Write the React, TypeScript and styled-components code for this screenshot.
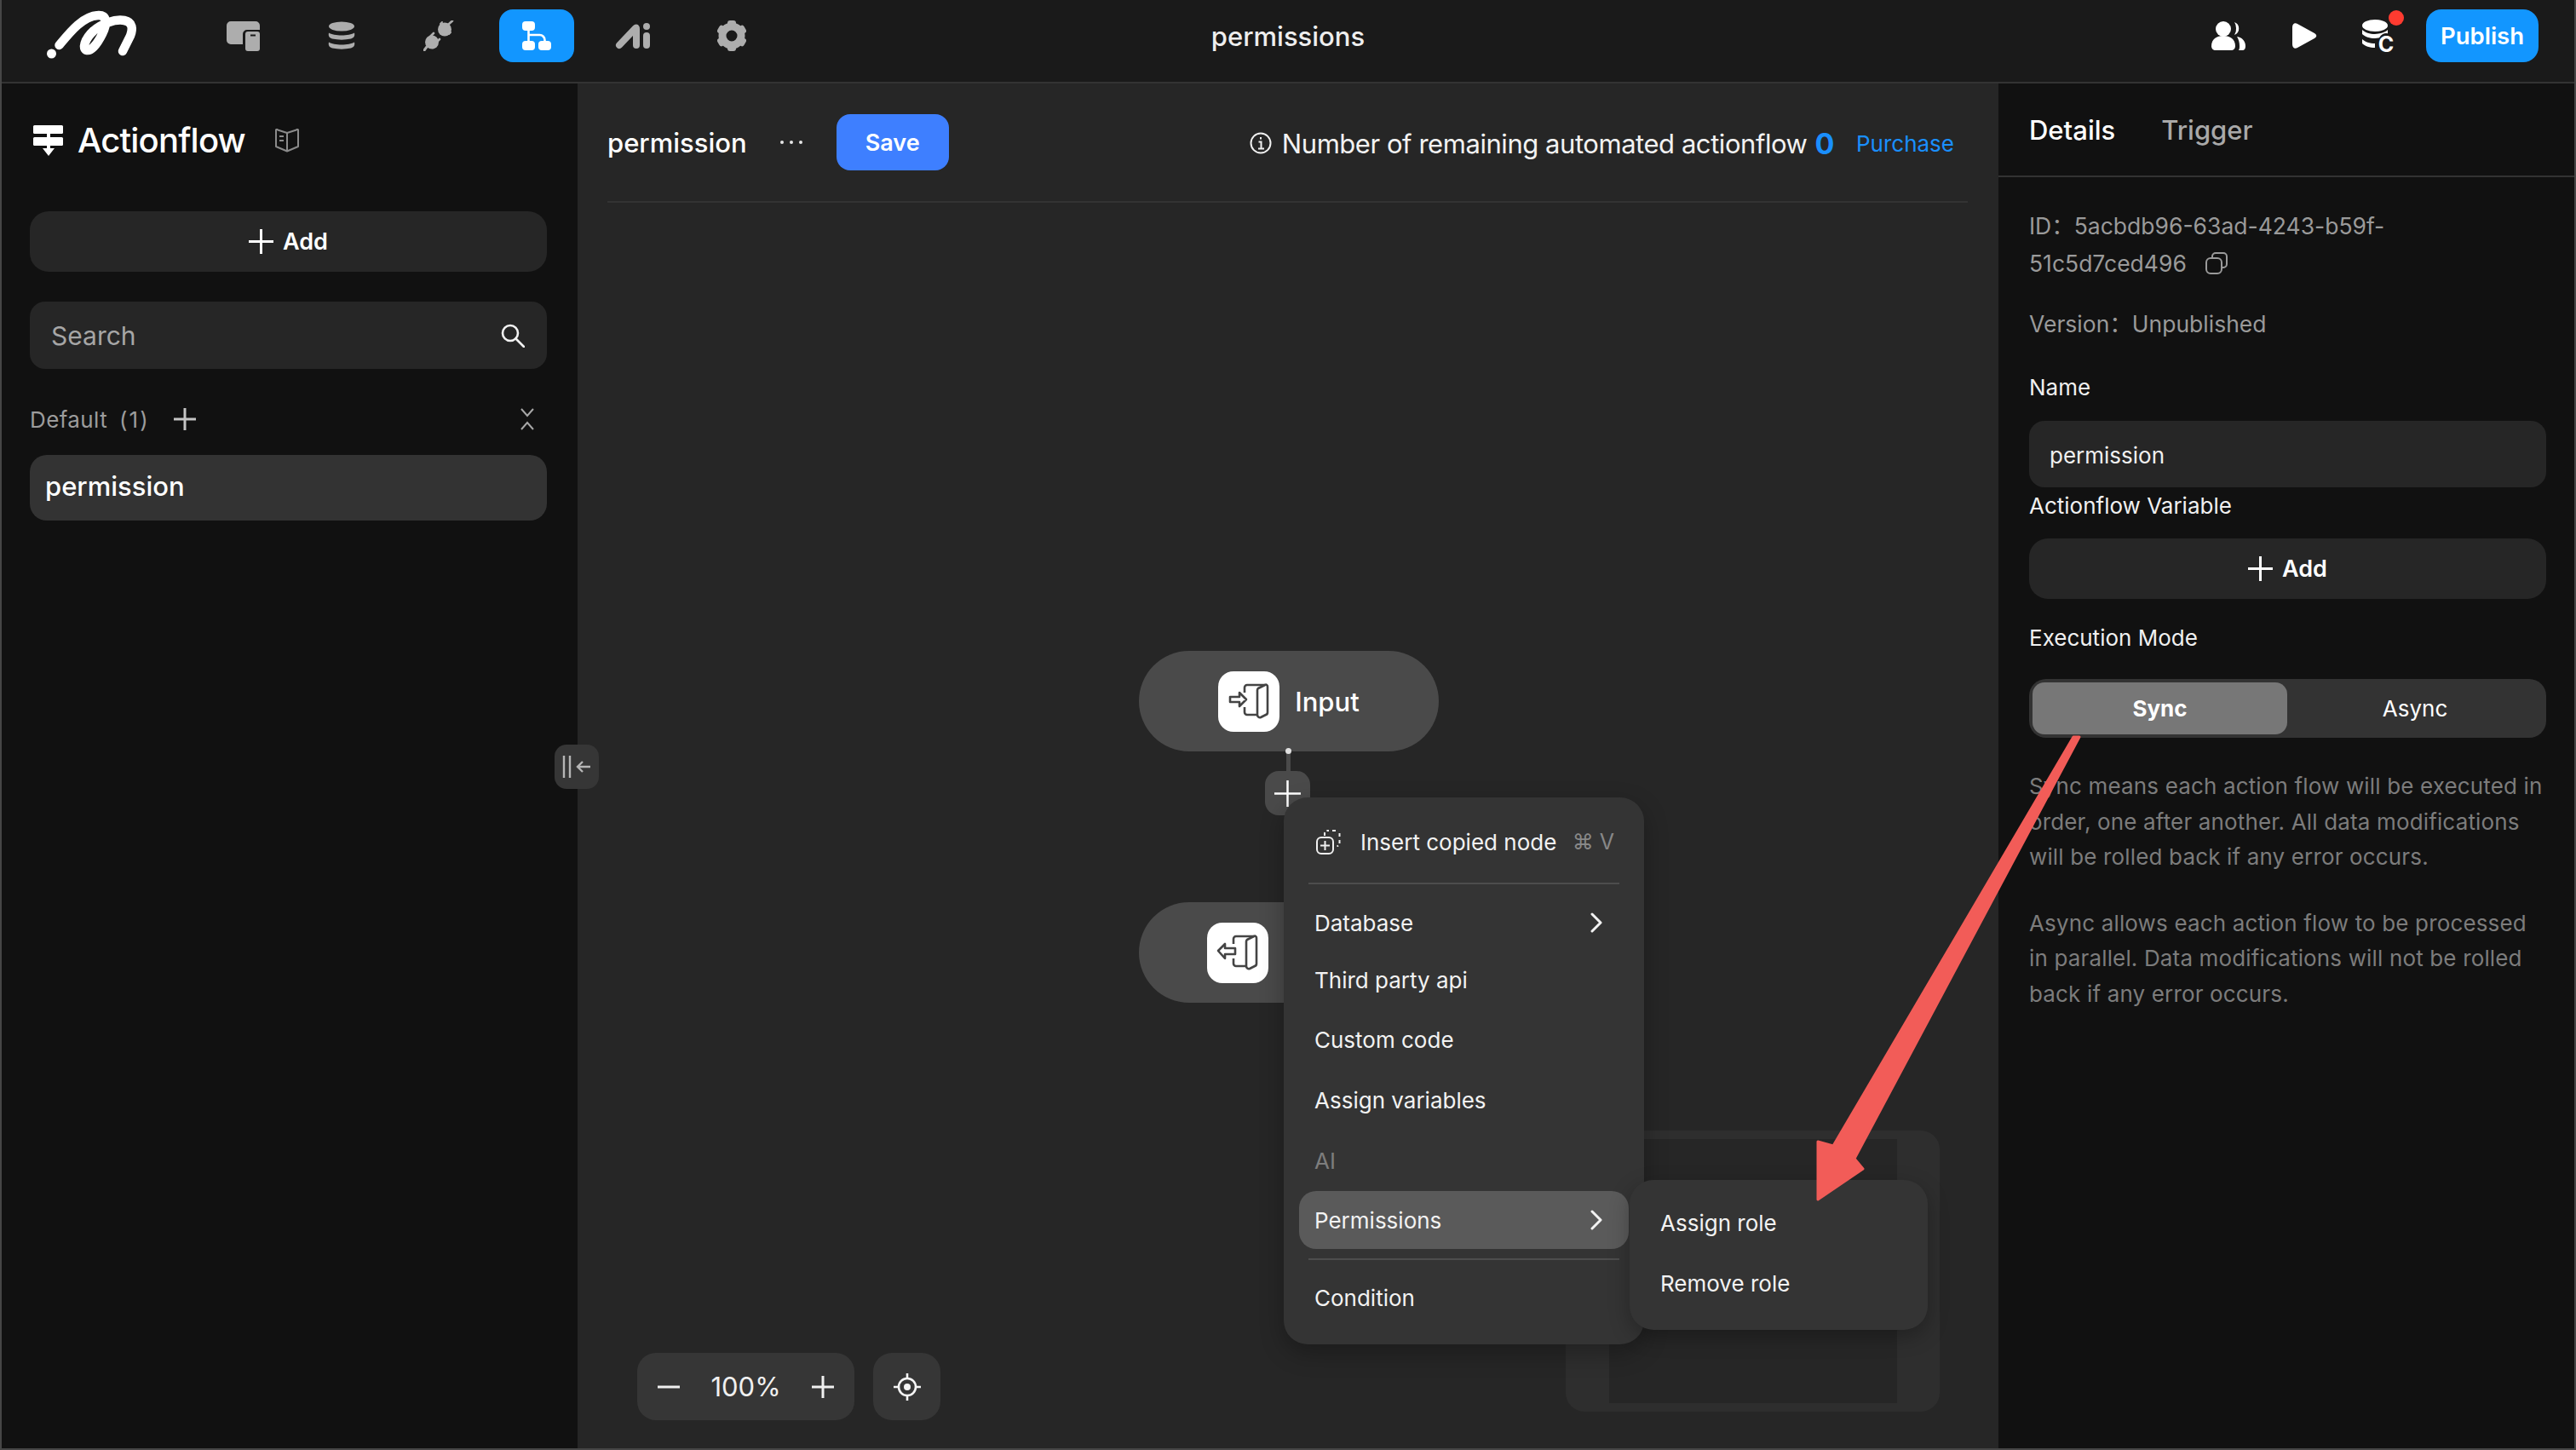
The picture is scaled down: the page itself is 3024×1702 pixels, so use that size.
import React from "react";
import styled, { createGlobalStyle } from "styled-components";

const GlobalStyle = createGlobalStyle`
  html, body {
    margin: 0;
    padding: 0;
    background: #111111;
  }
  * {
    box-sizing: border-box;
  }
  body {
    font-family: Inter, "Noto Sans CJK SC", "Liberation Sans", sans-serif;
    color: #ffffff;
  }
`;

const Shell = styled.div`
  position: relative;
  width: 3024px;
  height: 1702px;
  display: flex;
  flex-direction: column;
  overflow: hidden;
  border-left: 2px solid #464646;
  border-right: 2px solid #464646;
  border-bottom: 2px solid #464646;
`;

/* top bar */
const TopBar = styled.header`
  flex: 0 0 98px;
  display: grid;
  grid-template-columns: 1fr auto 1fr;
  align-items: center;
  background: #1a1a1a;
  border-bottom: 2px solid #333333;
  padding: 0 42px 12px 42px;
`;

const TopLeft = styled.div`
  display: flex;
  align-items: center;
`;

const LogoMark = styled.svg`
  width: 110px;
  height: 60px;
  margin: 0 78px 0 10px;
  display: block;
`;

const NavItem = styled.div<{ $active?: boolean }>`
  width: 88px;
  height: 62px;
  margin-right: 26.5px;
  border-radius: 16px;
  display: flex;
  align-items: center;
  justify-content: center;
  background: ${(p) => (p.$active ? "#1296ff" : "transparent")};
  color: ${(p) => (p.$active ? "#ffffff" : "#adadad")};
`;

const PageTitle = styled.div`
  font-size: 31px;
  font-weight: 500;
  color: #eeeeee;
`;

const TopRight = styled.div`
  display: flex;
  align-items: center;
  justify-content: flex-end;
`;

const ToolIcon = styled.div<{ $gap: number }>`
  position: relative;
  display: flex;
  margin-right: ${(p) => p.$gap}px;
  color: #ffffff;
`;

const RedDot = styled.span`
  position: absolute;
  top: -11px;
  right: -14px;
  width: 18px;
  height: 18px;
  border-radius: 50%;
  background: #ff3b30;
`;

const CoinLetter = styled.span`
  position: absolute;
  right: -3px;
  bottom: -5px;
  font-size: 25px;
  line-height: 27px;
  font-weight: 700;
  color: #ffffff;
  background: #1a1a1a;
  border-radius: 50%;
  width: 20px;
  text-align: center;
`;

const PublishButton = styled.div`
  width: 132px;
  height: 62px;
  border-radius: 18px;
  background: #1296ff;
  display: flex;
  align-items: center;
  justify-content: center;
  font-size: 27.5px;
  font-weight: 600;
`;

/* three columns */
const Columns = styled.div`
  flex: 1;
  display: flex;
  min-height: 0;
`;

const Sidebar = styled.aside`
  flex: 0 0 676px;
  background: #111111;
  padding: 37px 36px 0 33px;
  display: flex;
  flex-direction: column;
`;

const SideTitleRow = styled.div`
  display: flex;
  align-items: center;
  height: 60px;
  margin-bottom: 53px;
  padding-left: 3px;
`;

const SideTitle = styled.h1`
  margin: 0 35px 0 16px;
  font-size: 40px;
  font-weight: 500;
  letter-spacing: -0.8px;
  line-height: 60px;
  white-space: nowrap;
`;

const AddButton = styled.div`
  height: 71px;
  border-radius: 22px;
  background: #262626;
  display: flex;
  align-items: center;
  justify-content: center;
  gap: 11px;
  font-size: 27px;
  font-weight: 600;
  color: #ffffff;
`;

const SearchBox = styled.div`
  margin-top: 35px;
  height: 79px;
  border-radius: 18px;
  background: #262626;
  display: flex;
  align-items: center;
  justify-content: space-between;
  padding: 0 26px 0 25px;
  font-size: 30px;
  color: #a6a6a6;
`;

const GroupRow = styled.div`
  margin-top: 35px;
  height: 48px;
  margin-bottom: 1px;
  display: flex;
  align-items: center;
  font-size: 26px;
  letter-spacing: 0.4px;
  color: #9c9c9c;
`;

const GroupCount = styled.span`
  margin-left: 14px;
  margin-right: 28px;
  letter-spacing: 2px;
`;

const GroupToggle = styled.span`
  margin-left: auto;
  margin-right: 14px;
  display: flex;
`;

const FlowItem = styled.div`
  margin-top: 17px;
  height: 77px;
  border-radius: 20px;
  background: #333333;
  display: flex;
  align-items: center;
  padding: 0 0 5px 18px;
  font-size: 31px;
  font-weight: 500;
`;

/* centre canvas */
const Main = styled.main`
  position: relative;
  flex: 0 0 1668px;
  background: #262626;
  padding: 0 36px 0 35px;
  display: flex;
  flex-direction: column;
`;

const MainHeader = styled.div`
  flex: 0 0 140px;
  display: flex;
  align-items: center;
  border-bottom: 2px solid #333333;
`;

const FlowName = styled.div`
  font-size: 31px;
  font-weight: 500;
`;

const MoreDots = styled.div`
  margin: 0 40px 0 39px;
  display: flex;
  gap: 7px;
`;

const Dot = styled.i`
  width: 4px;
  height: 4px;
  border-radius: 50%;
  background: #e6e6e6;
`;

const SaveButton = styled.div`
  width: 132px;
  height: 66px;
  border-radius: 16px;
  background: #3e7fff;
  display: flex;
  align-items: center;
  justify-content: center;
  font-size: 27px;
  font-weight: 600;
`;

const Quota = styled.div`
  margin-left: auto;
  display: flex;
  align-items: center;
  font-size: 31px;
  letter-spacing: -0.45px;
  color: #f2f2f2;
  padding: 2px 16px 0 0;
`;

const QuotaText = styled.span`
  margin-left: 12px;
`;

const QuotaCount = styled.span`
  margin-left: 9px;
  font-size: 34px;
  font-weight: 700;
  color: #1a8fff;
`;

const PurchaseLink = styled.span`
  margin-left: 26px;
  font-size: 26px;
  letter-spacing: 0;
  color: #1a8fff;
`;

const CollapseHandle = styled.div`
  position: absolute;
  left: -27px;
  top: 776px;
  width: 52px;
  height: 52px;
  border-radius: 14px;
  background: #363636;
  display: flex;
  align-items: center;
  justify-content: center;
`;

const FlowNode = styled.div<{ $top: number }>`
  position: absolute;
  left: 659px;
  top: ${(p) => p.$top}px;
  width: 352px;
  height: 118px;
  border-radius: 59px;
  background: #4a4a4a;
  display: flex;
  align-items: center;
  justify-content: center;
  gap: 18px;
  font-size: 31px;
  font-weight: 500;
`;

const NodeTile = styled.div`
  width: 72px;
  height: 71px;
  border-radius: 18px;
  background: #ffffff;
  display: flex;
  align-items: center;
  justify-content: center;
`;

const Connector = styled.div`
  position: absolute;
  left: 832px;
  top: 780px;
  width: 5px;
  height: 30px;
  background: #4a4a4a;
  &::before {
    content: "";
    position: absolute;
    left: -1px;
    top: 0;
    width: 7px;
    height: 7px;
    border-radius: 50%;
    background: #e0e0e0;
  }
`;

const NodeAdd = styled.div`
  position: absolute;
  left: 807px;
  top: 807px;
  width: 53px;
  height: 52px;
  border-radius: 16px;
  background: #4a4a4a;
  display: flex;
  align-items: center;
  justify-content: center;
`;

const Minimap = styled.div`
  position: absolute;
  left: 1160px;
  top: 1229px;
  width: 439px;
  height: 330px;
  border-radius: 22px;
  background: #2e2e2e;
  padding: 10px 50px 10px 51px;
`;

const MinimapView = styled.div`
  width: 100%;
  height: 100%;
  background: #262626;
`;

const Menu = styled.div`
  position: absolute;
  left: 829px;
  top: 838px;
  width: 423px;
  height: 642px;
  border-radius: 28px;
  background: #343434;
  box-shadow: 0 10px 28px rgba(0, 0, 0, 0.28);
  padding: 18px;
  font-size: 26px;
  color: #f2f2f2;
`;

const SubMenu = styled.div`
  position: absolute;
  left: 1235px;
  top: 1287px;
  width: 350px;
  height: 176px;
  border-radius: 28px;
  background: #343434;
  box-shadow: 0 8px 24px rgba(0, 0, 0, 0.28);
  padding-top: 15px;
  font-size: 26px;
  color: #f2f2f2;
`;

const MenuRow = styled.div<{ $h: number; $active?: boolean; $muted?: boolean; $inset?: number }>`
  height: ${(p) => p.$h}px;
  display: flex;
  align-items: center;
  padding: 0 31px 0 ${(p) => p.$inset ?? 18}px;
  border-radius: 20px;
  background: ${(p) => (p.$active ? "#5a5a5a" : "transparent")};
  color: ${(p) => (p.$muted ? "#7d7d7d" : "#f2f2f2")};
  justify-content: space-between;
`;

const InsertLabel = styled.span`
  margin-left: 23px;
`;

const Shortcut = styled.span`
  margin-left: auto;
  color: #888888;
  font-size: 25px;
  margin-right: -14px;
  white-space: nowrap;
`;

const MenuDivider = styled.div<{ $before: number; $after: number }>`
  height: 2px;
  margin: ${(p) => p.$before}px 11px ${(p) => p.$after}px;
  background: #4d4d4d;
`;

const ZoomDock = styled.div`
  position: absolute;
  left: 70px;
  top: 1490px;
  display: flex;
  gap: 22px;
`;

const DockBox = styled.div<{ $w: number }>`
  width: ${(p) => p.$w}px;
  height: 79px;
  border-radius: 22px;
  background: #363636;
  display: flex;
  align-items: center;
  justify-content: space-between;
  padding: 0 24px;
  font-size: 31px;
  color: #f0f0f0;
`;

const CenteredDock = styled(DockBox)`
  justify-content: center;
  padding: 0;
`;

/* right panel */
const Details = styled.aside`
  flex: 1;
  background: #111111;
  display: flex;
  flex-direction: column;
`;

const Tabs = styled.div`
  flex: 0 0 110px;
  display: flex;
  align-items: center;
  gap: 54px;
  padding: 0 0 0 36px;
  border-bottom: 2px solid #333333;
`;

const Tab = styled.div<{ $on?: boolean }>`
  font-size: 31px;
  font-weight: 500;
  color: ${(p) => (p.$on ? "#ffffff" : "#a9a9a9")};
`;

const DetailBody = styled.div`
  padding: 35px 33px 0 36px;
`;

const MetaText = styled.div`
  font-size: 26.5px;
  line-height: 44px;
  color: #9a9a9a;
`;

const MetaLine = styled(MetaText)`
  margin-top: 27px;
`;

const CopyGlyph = styled.svg`
  display: inline-block;
  vertical-align: -3px;
  margin-left: 22px;
`;

const FieldLabel = styled.div<{ $top: number }>`
  margin-top: ${(p) => p.$top}px;
  font-size: 26px;
  line-height: 34px;
  color: #f0f0f0;
`;

const NameInput = styled.div`
  margin-top: 22px;
  height: 78px;
  border-radius: 18px;
  background: #262626;
  display: flex;
  align-items: center;
  padding: 2px 0 0 24px;
  font-size: 26px;
  color: #f0f0f0;
`;

const VariableAdd = styled(AddButton)`
  margin-top: 21px;
`;

const Segmented = styled.div`
  margin-top: 31px;
  height: 69px;
  border-radius: 20px;
  background: #333333;
  padding: 4px;
  display: flex;
  font-size: 26px;
`;

const Segment = styled.div<{ $on?: boolean }>`
  flex: ${(p) => (p.$on ? "0 0 299px" : "1")};
  border-radius: 14px;
  background: ${(p) => (p.$on ? "#777777" : "transparent")};
  font-weight: ${(p) => (p.$on ? 700 : 400)};
  display: flex;
  align-items: center;
  justify-content: center;
`;

const HelpText = styled.p<{ $top: number }>`
  margin: ${(p) => p.$top}px 0 0;
  font-size: 26px;
  line-height: 41.5px;
  letter-spacing: 0.15px;
  color: #7c7c7c;
`;

const ArrowMark = styled.svg`
  position: absolute;
  left: 2116px;
  top: 860px;
  width: 330px;
  height: 560px;
  pointer-events: none;
`;

const PlusIcon = ({ size = 29, width = 3, color = "#ffffff" }: { size?: number; width?: number; color?: string }) => (
  <svg width={size} height={size} viewBox={`0 0 ${size} ${size}`}>
    <path d={`M${size / 2} 0v${size}M0 ${size / 2}h${size}`} stroke={color} strokeWidth={width} fill="none" />
  </svg>
);

const ChevronRight = () => (
  <svg width="14" height="24" viewBox="0 0 14 24">
    <path d="M2 2l10 10L2 22" stroke="#f2f2f2" strokeWidth="3" fill="none" strokeLinecap="round" strokeLinejoin="round" />
  </svg>
);

const DoorIcon = ({ flip }: { flip?: boolean }) => (
  <svg width="50" height="44" viewBox="0 0 50 44" fill="none" stroke="#444444" strokeWidth="2.6" strokeLinejoin="round">
    {flip ? (
      <path d="M2 20l8-8v5h12v7H10v5z" />
    ) : (
      <path d="M3 17h11v-5l8 8-8 8v-5H3z" />
    )}
    <path d="M20 12V6a3 3 0 0 1 3-3h21" />
    <path d="M20 29v6a3 3 0 0 0 3 3h12" />
    <path d="M36 7l8-4a2 2 0 0 1 3 2v30a3 3 0 0 1-2 3l-6 3a3 3 0 0 1-4-3V9a3 3 0 0 1 1-2z" />
  </svg>
);

const Gear = () => (
  <svg width="34" height="36" viewBox="0 0 34 36" fill="#adadad">
    <circle cx="17" cy="18" r="11" fill="none" stroke="#adadad" strokeWidth="9" />
    {[0, 60, 120, 180, 240, 300].map((a) => (
      <rect key={a} x="12" y="0" width="10" height="8" rx="3" transform={`rotate(${a} 17 18)`} />
    ))}
  </svg>
);

export default function App() {
  return (
    <>
      <GlobalStyle />
      <Shell>
        <TopBar>
          <TopLeft>
            <LogoMark viewBox="0 0 110 60">
              <circle cx="6.5" cy="51" r="5.5" fill="#fff" />
              <path
                d="M15.5 41C28 26 43 7 61 6c11-1 11 10 5 22-6 12-13 20-18 19-6-1-3-13 8-23 10-8 24-14 36-12 10 2 10 10 7 18l-9 18"
                fill="none"
                stroke="#fff"
                strokeWidth="10.5"
                strokeLinecap="round"
                strokeLinejoin="round"
              />
            </LogoMark>
            <NavItem>
              <svg width="40" height="36" viewBox="0 0 40 36">
                <path d="M5 1h29a5 5 0 0 1 5 5v5H24a5 5 0 0 0-5 5v12H5a5 5 0 0 1-5-5V6a5 5 0 0 1 5-5z" fill="currentColor" />
                <path fillRule="evenodd" clipRule="evenodd" d="M25 13h11a3 3 0 0 1 3 3v17a3 3 0 0 1-3 3H25a3 3 0 0 1-3-3V16a3 3 0 0 1 3-3zm3 3.5v2h6v-2z" fill="currentColor" />
              </svg>
            </NavItem>
            <NavItem>
              <svg width="32" height="34" viewBox="0 0 32 34" fill="currentColor">
                <ellipse cx="16" cy="6" rx="15" ry="5.5" />
                <path d="M1 13.500c3 2 9 3 15 3s12-1 15-3c1 4-1 6-4 7-7 1.500-15 1.500-22 0-3-1-5-3-4-7z" />
                <path d="M1 24.500c3 2 9 3 15 3s12-1 15-3c1 4-1 6-4 7-7 1.500-15 1.500-22 0-3-1-5-3-4-7z" />
              </svg>
            </NavItem>
            <NavItem>
              <svg width="36" height="36" viewBox="0 0 36 36" fill="currentColor" stroke="currentColor" strokeLinecap="round">
                <circle cx="25" cy="10.500" r="8" stroke="none" />
                <path d="M29 5l5-4.500" strokeWidth="2.600" />
                <path d="M20 4l2-2M30 16l2-2" strokeWidth="2" />
                <circle cx="10" cy="25.500" r="8" stroke="none" />
                <path d="M4 31l-3 4" strokeWidth="3" />
                <path d="M8 19l4-4M15 26l4-4" strokeWidth="2.600" />
              </svg>
            </NavItem>
            <NavItem $active>
              <svg width="36" height="34" viewBox="0 0 36 34" fill="currentColor">
                <rect x="1" y="0" width="15" height="11" rx="4" />
                <rect x="1" y="23" width="15" height="11" rx="4" />
                <rect x="20" y="23" width="15" height="11" rx="4" />
                <path d="M8.500 10v14M8.500 16h13a6 6 0 0 1 6 6v2" fill="none" stroke="currentColor" strokeWidth="2.600" />
              </svg>
            </NavItem>
            <NavItem>
              <svg width="44" height="32" viewBox="0 0 44 32" fill="none" stroke="currentColor" strokeWidth="8" strokeLinecap="round" strokeLinejoin="round">
                <path d="M5 27L24 7c1-1 1 0 1 1v19" />
                <circle cx="37" cy="5" r="4" fill="currentColor" stroke="none" />
                <path d="M37 16v11" />
              </svg>
            </NavItem>
            <NavItem>
              <Gear />
            </NavItem>
          </TopLeft>
          <PageTitle>permissions</PageTitle>
          <TopRight>
            <ToolIcon $gap={55}>
              <svg width="40" height="34" viewBox="0 0 40 34" fill="#fff">
                <circle cx="14" cy="9" r="9" />
                <path d="M0 29c0-8 6-12 14-12s14 4 14 12c0 3-2 5-5 5H5c-3 0-5-2-5-5z" />
                <path d="M27 1a8 8 0 0 1 0 15 12 12 0 0 0 2-8 12 12 0 0 0-2-7z" />
                <path d="M30 18c6 1 10 5 10 11 0 3-1 5-4 5h-4c1-2 1-3 1-5 0-4-1-8-3-11z" />
              </svg>
            </ToolIcon>
            <ToolIcon $gap={53}>
              <svg width="29" height="30" viewBox="0 0 29 30">
                <path d="M0 5C0 1 3-1 6 1l20 11c3 2 3 4 0 6L6 29c-3 2-6 0-6-4z" fill="#fff" />
              </svg>
            </ToolIcon>
            <ToolIcon $gap={40}>
              <svg width="35" height="38" viewBox="0 0 35 38" fill="#fff">
                <ellipse cx="15" cy="7" rx="15" ry="7" />
                <path d="M0 12c3 3 9 5 15 5s12-2 15-5v5c-3 3-9 5-15 5S3 20 0 17z" />
                <path d="M0 23c3 3 9 5 15 5v5C9 33 3 31 0 28z" />
              </svg>
              <CoinLetter>C</CoinLetter>
              <RedDot />
            </ToolIcon>
            <PublishButton>Publish</PublishButton>
          </TopRight>
        </TopBar>

        <Columns>
          <Sidebar>
            <SideTitleRow>
              <svg width="37" height="37" viewBox="0 0 37 37" fill="#fff">
                <rect x="1" y="0" width="35" height="10" rx="1.500" />
                <rect x="1" y="14" width="35" height="10" rx="1.500" />
                <path d="M17 10h4v4h-4zM17 24h4v3h5l-7 9-7-9h5z" />
              </svg>
              <SideTitle>Actionflow</SideTitle>
              <svg width="28" height="28" viewBox="0 0 28 28" fill="none" stroke="#8a8a8a" strokeWidth="2" strokeLinejoin="round">
                <path d="M14 5L3 1.500a1 1 0 0 0-2 1V21l13 5.500L27 21V2.500a1 1 0 0 0-2-1z" />
                <path d="M14 5v21M5 9h5M5 14h5" />
              </svg>
            </SideTitleRow>
            <AddButton>
              <PlusIcon />
              Add
            </AddButton>
            <SearchBox>
              Search
              <svg width="28" height="28" viewBox="0 0 28 28" fill="none" stroke="#f2f2f2" strokeWidth="2.600" strokeLinecap="round">
                <circle cx="11" cy="11" r="9" />
                <path d="M17.500 17.500L27 27" />
              </svg>
            </SearchBox>
            <GroupRow>
              Default
              <GroupCount>(1)</GroupCount>
              <PlusIcon size={26} width={3} color="#c4c4c4" />
              <GroupToggle>
                <svg width="18" height="26" viewBox="0 0 18 26" fill="none" stroke="#a8a8a8" strokeWidth="2">
                  <path d="M2 1l7 8 7-8M2 25l7-8 7 8" />
                </svg>
              </GroupToggle>
            </GroupRow>
            <FlowItem>permission</FlowItem>
          </Sidebar>

          <Main>
            <MainHeader>
              <FlowName>permission</FlowName>
              <MoreDots>
                <Dot />
                <Dot />
                <Dot />
              </MoreDots>
              <SaveButton>Save</SaveButton>
              <Quota>
                <svg width="26" height="26" viewBox="0 0 26 26" fill="none" stroke="#f0f0f0" strokeWidth="2">
                  <circle cx="13" cy="13" r="11.500" />
                  <path d="M10.500 11.500H13.500V19.500M10 19.500h7M13 6v2.500" />
                </svg>
                <QuotaText>Number of remaining automated actionflow</QuotaText>
                <QuotaCount>0</QuotaCount>
                <PurchaseLink>Purchase</PurchaseLink>
              </Quota>
            </MainHeader>

            <CollapseHandle>
              <svg width="34" height="26" viewBox="0 0 34 26" fill="none" stroke="#b5b5b5" strokeWidth="2.400">
                <path d="M2 0v26M9 0v26M33 13H18M24 7l-6 6 6 6" />
              </svg>
            </CollapseHandle>

            <FlowNode $top={666}>
              <NodeTile>
                <DoorIcon />
              </NodeTile>
              Input
            </FlowNode>
            <FlowNode $top={961}>
              <NodeTile>
                <DoorIcon flip />
              </NodeTile>
              Output
            </FlowNode>
            <Connector />
            <NodeAdd>
              <PlusIcon size={31} width={2.5} />
            </NodeAdd>

            <Minimap>
              <MinimapView />
            </Minimap>

            <Menu>
              <MenuRow $h={68} $inset={20}>
                <svg width="29" height="29" viewBox="0 0 29 29" fill="none" stroke="#f0f0f0" strokeWidth="2">
                  <path d="M10 7V4a3 3 0 0 1 3-3h2M19 1h5M27.500 4v4M27.500 12v4a3 3 0 0 1-3 3" strokeDasharray="4 3" />
                  <rect x="1" y="9" width="19" height="19" rx="5" />
                  <path d="M10.500 13v11M5 18.500h11" />
                </svg>
                <InsertLabel>Insert copied node</InsertLabel>
                <Shortcut>⌘ V</Shortcut>
              </MenuRow>
              <MenuDivider $before={14} $after={11} />
              <MenuRow $h={68}>
                Database
                <ChevronRight />
              </MenuRow>
              <MenuRow $h={67}>Third party api</MenuRow>
              <MenuRow $h={72}>Custom code</MenuRow>
              <MenuRow $h={70}>Assign variables</MenuRow>
              <MenuRow $h={72} $muted>
                AI
              </MenuRow>
              <MenuRow $h={68} $active>
                Permissions
                <ChevronRight />
              </MenuRow>
              <MenuDivider $before={11} $after={9} />
              <MenuRow $h={70}>Condition</MenuRow>
            </Menu>

            <SubMenu>
              <MenuRow $h={71} $inset={36}>
                Assign role
              </MenuRow>
              <MenuRow $h={71} $inset={36}>
                Remove role
              </MenuRow>
            </SubMenu>

            <ZoomDock>
              <DockBox $w={255}>
                <svg width="26" height="26" viewBox="0 0 26 26">
                  <path d="M0 13h26" stroke="#f0f0f0" strokeWidth="3" />
                </svg>
                100%
                <PlusIcon size={26} width={3} color="#f0f0f0" />
              </DockBox>
              <CenteredDock $w={79}>
                <svg width="32" height="32" viewBox="0 0 32 32" fill="none" stroke="#f5f5f5" strokeWidth="2.600">
                  <circle cx="16" cy="16" r="10" />
                  <circle cx="16" cy="16" r="4" fill="#f5f5f5" stroke="none" />
                  <path d="M16 0v6M16 26v6M0 16h6M26 16h6" />
                </svg>
              </CenteredDock>
            </ZoomDock>
          </Main>

          <Details>
            <Tabs>
              <Tab $on>Details</Tab>
              <Tab>Trigger</Tab>
            </Tabs>
            <DetailBody>
              <MetaText>
                ID：5acbdb96-63ad-4243-b59f-
                <br />
                51c5d7ced496
                <CopyGlyph width="26" height="26" viewBox="0 0 26 26" fill="none" stroke="#9a9a9a" strokeWidth="2">
                  <rect x="1" y="7" width="18" height="18" rx="5" />
                  <path d="M8 7V5a4 4 0 0 1 4-4h9a4 4 0 0 1 4 4v9a4 4 0 0 1-4 4h-2" />
                </CopyGlyph>
              </MetaText>
              <MetaLine>Version：Unpublished</MetaLine>
              <FieldLabel $top={36}>Name</FieldLabel>
              <NameInput>permission</NameInput>
              <FieldLabel $top={5}>Actionflow Variable</FieldLabel>
              <VariableAdd>
                <PlusIcon />
                Add
              </VariableAdd>
              <FieldLabel $top={29}>Execution Mode</FieldLabel>
              <Segmented>
                <Segment $on>Sync</Segment>
                <Segment>Async</Segment>
              </Segmented>
              <HelpText $top={36}>
                Sync means each action flow will be executed in order, one after another. All data modifications will be rolled back if any error occurs.
              </HelpText>
              <HelpText $top={36}>
                Async allows each action flow to be processed in parallel. Data modifications will not be rolled back if any error occurs.
              </HelpText>
            </DetailBody>
          </Details>
        </Columns>

        <ArrowMark viewBox="2118 860 330 560">
          <path
            d="M2434 865L2441 865L2177 1360L2187 1372L2134 1408L2134 1340L2152 1345Z"
            fill="#f25c58"
            stroke="#f25c58"
            strokeWidth="3"
            strokeLinejoin="round"
          />
        </ArrowMark>
      </Shell>
    </>
  );
}
